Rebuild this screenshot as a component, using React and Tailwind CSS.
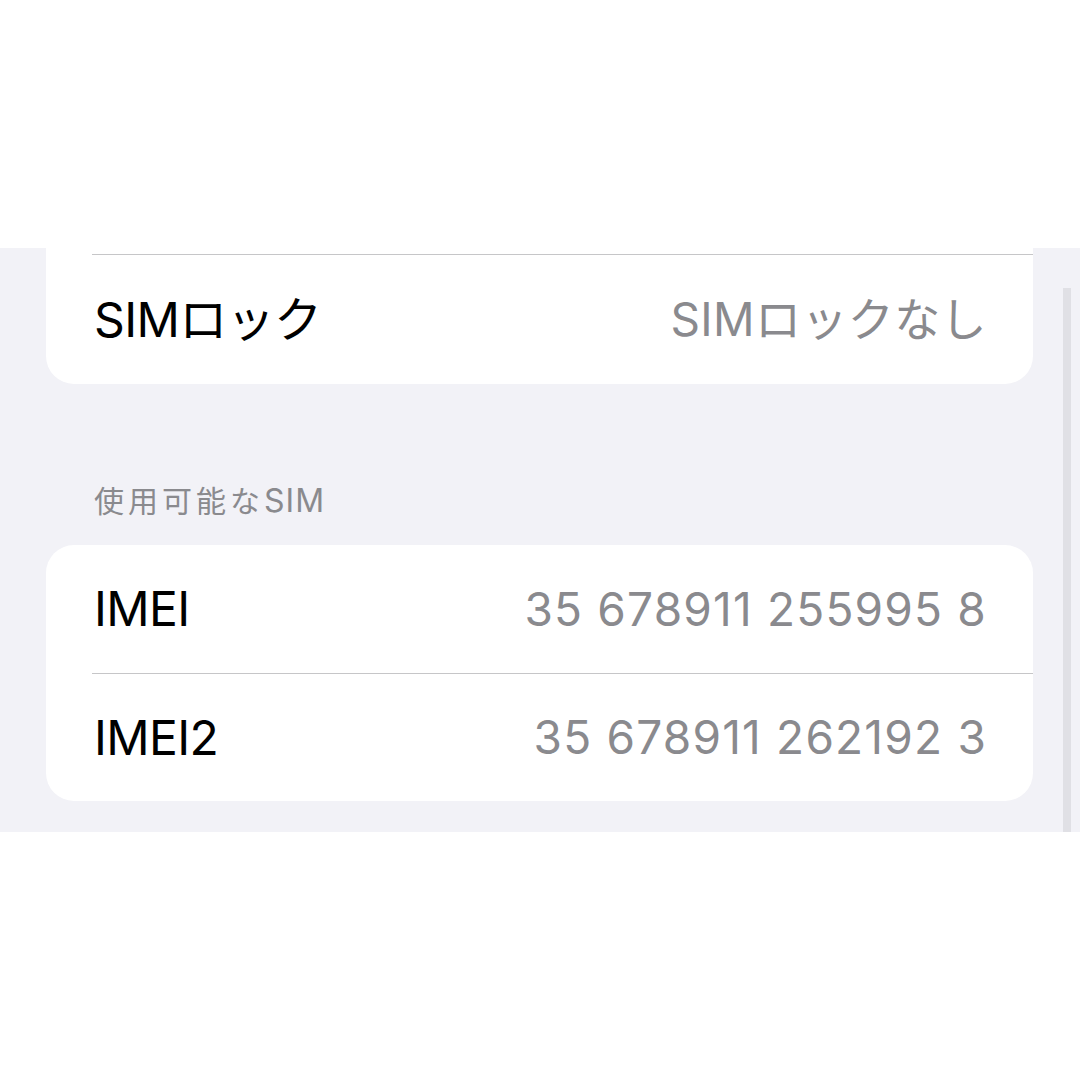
import React from 'react';

const font = { fontFamily: 'Inter, "Noto Sans CJK JP", sans-serif' };

const Row = ({ label, value, wide }) => (
  <div className="flex items-center justify-between pl-[48px] pr-[46px] h-full">
    <span className="text-[48px] text-black tracking-[-0.6px]">{label}</span>
    <span className={wide ? 'text-[46px] text-[#8a8a8e] tracking-[1.2px]' : 'text-[46px] text-[#8a8a8e] tracking-[0.4px]'}>
      {value}
    </span>
  </div>
);

const App = () => {
  return (
    <div className="w-[1080px] h-[1080px] bg-white flex flex-col" style={font}>
      <div className="h-[248px] bg-white" />
      <div className="relative h-[584px] bg-[#f2f2f7]">
        <div className="ml-[46px] w-[987px] bg-white rounded-b-[28px]">
          <div className="h-[6px]" />
          <div className="ml-[46px] h-px bg-[#c6c6c8]" />
          <div className="h-[129px]">
            <Row label="SIMロック" value="SIMロックなし" />
          </div>
        </div>

        <div className="pt-[98px] pl-[94px] pb-[25px]">
          <div className="text-[30px] leading-[38px] text-[#8a8a8e]">
            <span className="tracking-[4px]">使用可能な</span>
            <span className="text-[32px] tracking-[1px]">SIM</span>
          </div>
        </div>

        <div className="ml-[46px] w-[987px] bg-white rounded-[28px]">
          <div className="h-[128px]">
            <Row label="IMEI" value="35 678911 255995 8" wide />
          </div>
          <div className="ml-[46px] h-px bg-[#c6c6c8]" />
          <div className="h-[127px]">
            <Row label="IMEI2" value="35 678911 262192 3" wide />
          </div>
        </div>

        <div className="absolute left-[1063px] top-[40px] w-[8px] h-[544px] bg-[#e0e0e5]" />
      </div>
      <div className="flex-1 bg-white" />
    </div>
  );
};

export default App;
